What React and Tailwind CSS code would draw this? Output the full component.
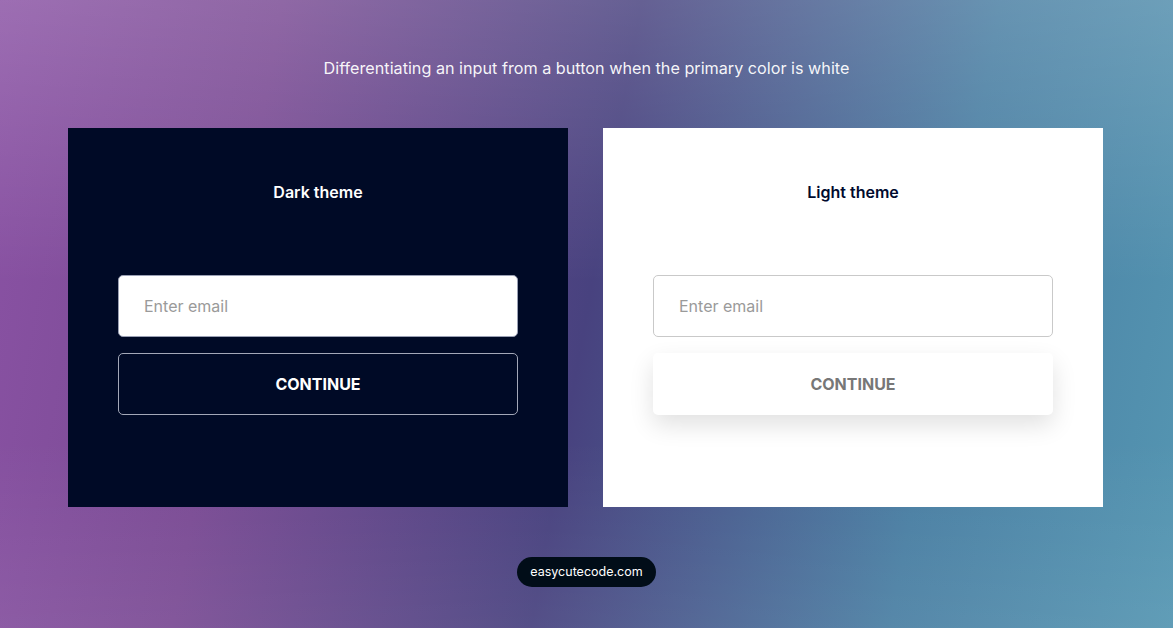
export default function App() {
  const bg = {
    backgroundImage:
      'linear-gradient(180deg, rgba(255,255,255,0.16) 0%, rgba(255,255,255,0) 45%, rgba(255,255,255,0) 70%, rgba(255,255,255,0.07) 100%), linear-gradient(100deg, #8a52a4 0%, #7a4b94 22%, #48427f 50%, #4a7fa3 78%, #5596b2 100%)',
  };

  return (
    <div
      className="w-[1173px] h-[628px] flex flex-col items-center overflow-hidden"
      style={{ ...bg, fontFamily: 'Inter, "Noto Sans", sans-serif' }}
    >
      <p className="mt-[58px] text-[16.2px] leading-[20px] text-white/95">
        Differentiating an input from a button when the primary color is white
      </p>

      <div className="mt-[50px] mr-[2px] flex gap-[35px]">
        {/* Dark theme card */}
        <div className="w-[500px] h-[379px] bg-[#000a26] flex flex-col items-center px-[50px]">
          <h2 className="mt-[54px] text-[16px] leading-[20px] font-semibold text-white">Dark theme</h2>
          <input
            placeholder="Enter email"
            className="mt-[73px] w-full h-[62px] rounded-[5px] bg-white border border-[#9aa0b4] px-[25px] text-[16px] text-[#222] placeholder:text-[#9a9a9a] outline-none"
          />
          <button className="mt-[16px] w-full h-[62px] rounded-[5px] border border-[#a3a8b8] text-white text-[16px] font-bold">
            CONTINUE
          </button>
        </div>

        {/* Light theme card */}
        <div className="w-[500px] h-[379px] bg-white flex flex-col items-center px-[50px]">
          <h2 className="mt-[54px] text-[16px] leading-[20px] font-semibold text-[#000a2e]">Light theme</h2>
          <input
            placeholder="Enter email"
            className="mt-[73px] w-full h-[62px] rounded-[5px] bg-white border border-[#c9c9c9] px-[25px] text-[16px] text-[#222] placeholder:text-[#9a9a9a] outline-none"
          />
          <button className="mt-[16px] w-full h-[62px] rounded-[5px] bg-white text-[#777] text-[16px] font-bold shadow-[0_10px_24px_rgba(0,0,0,0.12)]">
            CONTINUE
          </button>
        </div>
      </div>

      <div className="mt-[50px] h-[30px] px-[13px] rounded-full bg-[#010d18] flex items-center text-[12.5px] text-white">
        easycutecode.com
      </div>
    </div>
  );
}
